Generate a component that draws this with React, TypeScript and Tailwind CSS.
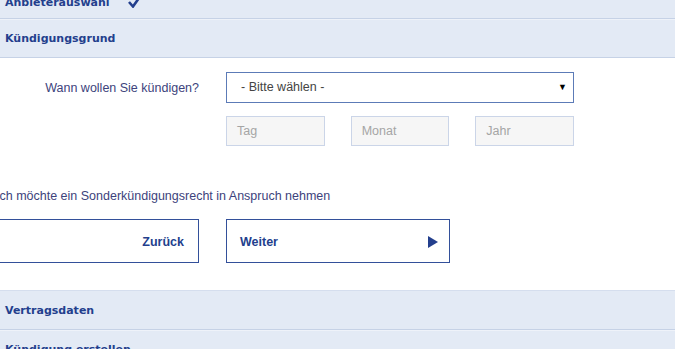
import React from 'react'

const headerCls =
  "flex items-center px-[5px] bg-[#e3eaf5] border-b border-[#c6d2e6] text-[11px] font-bold text-[#233f8d] [font-family:'DejaVu_Sans',sans-serif]"

function Header({ title, check, className = '' }: { title: string; check?: boolean; className?: string }) {
  return (
    <div className={`${headerCls} ${className}`}>
      <span>{title}</span>
      {check && (
        <svg className="ml-[18px] mt-[-2px]" width="12" height="11" viewBox="0 0 12 11">
          <path d="M1 5 L5 9.5 L11 1" fill="none" stroke="#233f8d" strokeWidth="2.6" />
        </svg>
      )}
    </div>
  )
}

export default function App() {
  return (
    <div className="w-[675px] h-[349px] overflow-hidden bg-white [font-family:'Liberation_Sans',Arial,sans-serif]">
      <Header title="Anbieterauswahl" check className="h-[39px] mt-[-20px] pt-[8px]" />
      <div className="h-px bg-[#eef2f9]" />
      <Header title="Kündigungsgrund" className="h-[38px] pt-[2px]" />
      <div className="h-[232px] bg-white pt-[14px]">
        <div className="flex">
          <div className="w-[199px] text-right text-[12.5px] text-[#3d437c] pt-[10px] leading-none">
            Wann wollen Sie kündigen?
          </div>
          <div className="ml-[27px] w-[348px]">
            <div className="h-[31px] border-[1.5px] border-[#5c7bb7] flex items-center justify-between pl-[14px] pr-[6px] text-[12.5px] text-[#444]">
              <span>- Bitte wählen -</span>
              <span className="text-[9px] text-black">▼</span>
            </div>
            <div className="mt-[13px] flex gap-[26px]">
              {['Tag', 'Monat', 'Jahr'].map((p) => (
                <div
                  key={p}
                  className="w-[99px] h-[30px] border border-[#cbd5e8] bg-[#f6f6f6] flex items-center pl-[10px] text-[12.5px] text-[#a5a5a5]"
                >
                  {p}
                </div>
              ))}
            </div>
          </div>
        </div>
        <div className="mt-[44px] ml-[-4px] text-[12.5px] text-[#3d437c] leading-none">
          Ich möchte ein Sonderkündigungsrecht in Anspruch nehmen
        </div>
        <div className="mt-[16px] flex ml-[-25px] gap-[27px]">
          <div className="w-[224px] h-[44px] border border-[#33509a] flex items-center justify-end pr-[14px] pt-[3px] text-[12.5px] font-bold text-[#233f8d]">
            Zurück
          </div>
          <div className="w-[224px] h-[44px] border border-[#33509a] flex items-center justify-between pl-[13px] pr-[11px] pt-[3px] text-[12.5px] font-bold text-[#233f8d]">
            <span>Weiter</span>
            <svg width="10" height="12" viewBox="0 0 10 12">
              <path d="M0 0 L10 6 L0 12 Z" fill="#233f8d" />
            </svg>
          </div>
        </div>
      </div>
      <Header title="Vertragsdaten" className="h-[40px] border-t border-t-[#d5deee] pt-[2px]" />
      <div className="h-px bg-[#eef2f9]" />
      <Header title="Kündigung erstellen" className="h-[38px] pt-[2px]" />
    </div>
  )
}
